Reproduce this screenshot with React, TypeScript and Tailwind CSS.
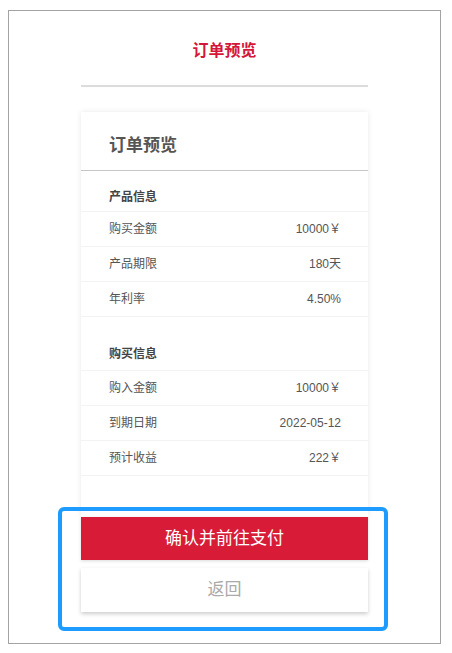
const font = {
  fontFamily: '"Liberation Sans", "Noto Sans CJK SC", sans-serif',
};

type Row = { label: string; value: string };

const productRows: Row[] = [
  { label: "购买金额", value: "10000￥" },
  { label: "产品期限", value: "180天" },
  { label: "年利率", value: "4.50%" },
];

const buyRows: Row[] = [
  { label: "购入金额", value: "10000￥" },
  { label: "到期日期", value: "2022-05-12" },
  { label: "预计收益", value: "222￥" },
];

function Section({ title, rows, first }: { title: string; rows: Row[]; first?: boolean }) {
  return (
    <div>
      <div
        className={`border-b border-[#f3f3f3] pl-[28px] text-[12px] leading-[18px] font-bold text-[#444] ${
          first ? "pt-[17px] pb-[5px]" : "pt-[28px] pb-[7px]"
        }`}
      >
        {title}
      </div>
      {rows.map((r) => (
        <div
          key={r.label}
          className="flex h-[35px] items-center justify-between border-b border-[#f3f3f3] pl-[28px] pr-[27px] text-[12px] text-[#555]"
        >
          <span>{r.label}</span>
          <span>{r.value}</span>
        </div>
      ))}
    </div>
  );
}

export default function App() {
  return (
    <div className="bg-white pl-[8px] pt-[10px]" style={font}>
      <div className="relative h-[634px] w-[433px] border border-[#a3a3a3] bg-white">
        <h1 className="pt-[28px] text-center text-[16px] leading-[24px] font-bold text-[#d5163b]">
          订单预览
        </h1>
        <div className="mx-auto mt-[22px] h-[2px] w-[287px] bg-[#dcdcdc]" />

        <div className="mx-auto mt-[25px] w-[287px]">
          <div className="bg-white pb-[41px] shadow-[0_0_6px_rgba(0,0,0,0.09)]">
            <div className="border-b border-[#c6c6c6] pt-[22px] pb-[12px] pl-[28px] text-[17px] leading-[24px] font-bold text-[#555]">
              订单预览
            </div>
            <Section title="产品信息" rows={productRows} first />
            <Section title="购买信息" rows={buyRows} />
          </div>
          <button className="flex h-[43px] w-full items-center justify-center bg-[#d81c38] text-[17px] text-white shadow-[0_1px_3px_rgba(0,0,0,0.15)]">
            确认并前往支付
          </button>
          <button className="mt-[8px] flex h-[44px] w-full items-center justify-center bg-white text-[17px] text-[#aaa] shadow-[0_2px_4px_rgba(0,0,0,0.2)]">
            返回
          </button>
        </div>

        <div className="pointer-events-none absolute left-[49px] top-[496px] h-[124px] w-[330px] rounded-[6px] border-[4px] border-[#1e9bff]" />
      </div>
    </div>
  );
}
